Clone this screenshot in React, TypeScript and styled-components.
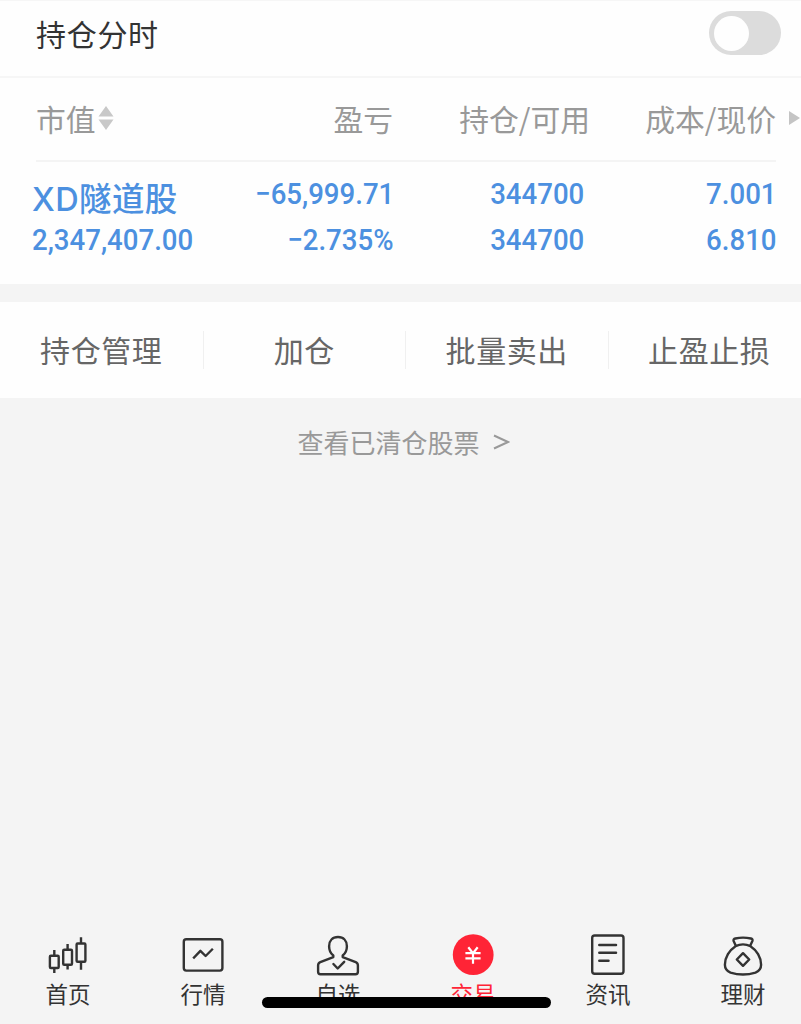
import React from "react";
import styled, { createGlobalStyle } from "styled-components";

const GlobalStyle = createGlobalStyle`
  * { box-sizing: border-box; }
  body {
    margin: 0;
    background: #f4f4f4;
    font-family: "Noto Sans CJK SC", "Noto Sans", sans-serif;
  }
`;

const Page = styled.div`
  position: relative;
  display: flex;
  flex-direction: column;
  height: 1024px;
  overflow: hidden;
  background: #f4f4f4;
`;

const TitleBar = styled.header`
  display: flex;
  flex: none;
  align-items: center;
  justify-content: space-between;
  height: 78px;
  padding: 0 20px 11px 36px;
  background: #fefefe;
  border-top: 1px solid #f6f6f6;
  border-bottom: 2px solid #f6f6f6;
`;

const Title = styled.h1`
  margin: 0;
  padding-bottom: 1px;
  color: #333;
  font-size: 30px;
  font-weight: 400;
  line-height: 44px;
  letter-spacing: 0.7px;
`;

const Switch = styled.button`
  width: 72px;
  height: 44px;
  padding: 4px 5px;
  border: 0;
  border-radius: 22px;
  background: #dcdcdc;
`;

const Knob = styled.span`
  display: block;
  width: 35px;
  height: 35px;
  border-radius: 50%;
  background: #fefefe;
`;

const Holdings = styled.section`
  flex: none;
  height: 206px;
  background: #fefefe;
`;

const Columns = styled.div`
  display: grid;
  grid-template-columns: 197px 160px 197px 186px 1fr;
  padding-left: 36px;
`;

const HeadRow = styled(Columns)`
  height: 82px;
  padding-bottom: 3px;
  align-items: center;
`;

const HeadCell = styled.div<{ $left?: boolean }>`
  display: flex;
  align-items: center;
  justify-content: ${(p) => (p.$left ? "flex-start" : "flex-end")};
  color: #999;
  font-size: 29.8px;
  line-height: 44px;
  white-space: nowrap;
`;

const SortIcon = styled.svg`
  margin-left: 2px;
`;

const MoreIcon = styled.svg`
  margin-left: 13px;
`;

const Rule = styled.div`
  height: 2px;
  margin: 0 25px 0 36px;
  background: #f4f4f4;
`;

const StockRow = styled(Columns)`
  padding-top: 12px;
`;

const StockName = styled.div`
  height: 46px;
  font-family: Inter, "Noto Sans CJK SC", sans-serif;
  font-size: 32.5px;
  font-weight: 500;
  line-height: 52px;
  letter-spacing: 0.4px;
  white-space: nowrap;
`;

const Figure = styled.div`
  height: 46px;
  font-family: Roboto, "Liberation Sans", sans-serif;
  font-size: 30px;
  font-weight: 500;
  line-height: 39px;
  white-space: nowrap;
  transform: scaleX(0.92);
`;

const Pair = styled.div<{ $left?: boolean; $inset?: number }>`
  display: flex;
  flex-direction: column;
  align-items: ${(p) => (p.$left ? "flex-start" : "flex-end")};
  margin-left: ${(p) => (p.$left ? -4 : 0)}px;
  margin-right: -1px;
  padding-right: ${(p) => p.$inset ?? 0}px;
  color: #4c90e0;

  ${Figure} {
    transform-origin: ${(p) => (p.$left ? "left" : "right")} center;
  }
`;

const Actions = styled.nav`
  display: grid;
  flex: none;
  grid-template-columns: 203.5px repeat(3, 202.5px);
  align-items: center;
  height: 96px;
  margin-top: 18px;
  background: #fefefe;
`;

const Action = styled.button`
  height: 38px;
  padding: 0 0 2px;
  border: 0;
  border-right: 1px solid #f0f0f0;
  background: none;
  color: #666;
  font-family: inherit;
  font-size: 30px;
  line-height: 36px;
  letter-spacing: 0.6px;
`;

const ClearedLink = styled.a`
  display: flex;
  flex: none;
  align-items: center;
  align-self: center;
  height: 40px;
  margin: 24px 0 0 6px;
  color: #999;
  font-size: 26px;
  line-height: 40px;
  gap: 13px;
`;

const TabBar = styled.nav`
  display: flex;
  flex: none;
  justify-content: space-between;
  height: 104px;
  margin-top: auto;
  padding: 13px 10px 0 20px;
`;

const Tab = styled.button<{ $active?: boolean }>`
  display: flex;
  flex-direction: column;
  align-items: center;
  width: 96px;
  padding: 0;
  border: 0;
  background: none;
  color: ${(p) => (p.$active ? "#ff2436" : "#333")};
  font-family: inherit;
`;

const TabIcon = styled.svg`
  width: 44px;
  height: 44px;
  fill: none;
  stroke: #333;
  stroke-width: 2.4;
  stroke-linecap: round;
  stroke-linejoin: round;
`;

const TabLabel = styled.span`
  height: 32px;
  font-size: 22.5px;
  line-height: 33px;
`;

const HomeIndicator = styled.div`
  position: absolute;
  left: 262px;
  bottom: 16px;
  width: 289px;
  height: 11px;
  border-radius: 6px;
  background: #000;
`;

const tabs: { label: string; active?: boolean; icon: React.ReactNode }[] = [
  {
    label: "首页",
    icon: (
      <g strokeLinecap="butt">
        <rect x="3.9" y="22.8" width="8.8" height="12.2" rx="1" />
        <rect x="17.2" y="16.8" width="8.8" height="15" rx="1" />
        <rect x="30.6" y="10.5" width="8.8" height="18.2" rx="1" />
        <path d="M8.3 17v5.5M8.3 35v5M21.6 11v5.5M21.6 32v4.5M35 4.2v6M35 29v7.8" />
      </g>
    ),
  },
  {
    label: "行情",
    icon: (
      <>
        <rect x="2.8" y="6.2" width="38.6" height="31.4" rx="2.5" />
        <path d="M13 24.5l6.4-6.7 5.2 5.2 6.4-6.4" strokeLinecap="square" />
      </>
    ),
  },
  {
    label: "自选",
    icon: (
      <>
        <path d="M17.3 22.5c-3-2.4-4.2-5.7-4.2-9.3 0-5.6 3.5-9.2 8.9-9.2s8.9 3.6 8.9 9.2c0 3.6-1.2 6.9-4.2 9.3v1.6l13 5.1q2.2.9 2.2 3.2v6.4q0 2.4-2.4 2.4h-35q-2.4 0-2.4-2.4v-6.4q0-2.3 2.2-3.2l13-5.1z" />
        <path d="M17.4 31l4.3 4.5 6.5-6.7" />
      </>
    ),
  },
  {
    label: "交易",
    active: true,
    icon: (
      <>
        <circle cx="22.2" cy="21.7" r="20.4" fill="#ff2436" stroke="none" />
        <path
          d="M17.3 14.2l4.7 6 4.7-6M14.4 20.2h15.2M14.4 25.4h15.2M22 20v10.8"
          stroke="#fff"
          strokeWidth="2.2"
          strokeLinecap="butt"
        />
      </>
    ),
  },
  {
    label: "资讯",
    icon: (
      <>
        <rect x="6.2" y="2.5" width="31.3" height="38.3" rx="2.5" />
        <path d="M13.3 12H30M13.3 19.7H30M13.3 27.8h9.2" strokeWidth="2.5" />
      </>
    ),
  },
  {
    label: "理财",
    icon: (
      <>
        <path d="M14.6 12.2l-2-4.2Q12 6 14.3 5.5q7.7-1.8 15.6 0 2.2.5 1.5 2.5l-2 4.2" />
        <path d="M14.5 13.2Q22 9.5 29.5 13.2c6.1 4 10.6 11.2 10.6 18.5 0 3.8-1.8 6.3-5.6 7.9-8 2.5-17 2.5-25 0-3.8-1.6-5.6-4.1-5.6-7.9 0-7.3 4.5-14.5 10.6-18.5z" />
        <path d="M22 20.2l6.2 6.3-6.2 6.3-6.2-6.3z" />
      </>
    ),
  },
];

const actions = ["持仓管理", "加仓", "批量卖出", "止盈止损"];

export default function App() {
  return (
    <Page>
      <GlobalStyle />
      <TitleBar>
        <Title>持仓分时</Title>
        <Switch role="switch" aria-checked={false} aria-label="持仓分时">
          <Knob />
        </Switch>
      </TitleBar>

      <Holdings>
        <HeadRow>
          <HeadCell $left>
            市值
            <SortIcon width="16" height="26" viewBox="0 0 16 26" fill="#c8c8c8">
              <path d="M8 1l7.5 10.5H.5zM8 25L.5 14.5h15z" />
            </SortIcon>
          </HeadCell>
          <HeadCell>盈亏</HeadCell>
          <HeadCell>持仓/可用</HeadCell>
          <HeadCell>成本/现价</HeadCell>
          <MoreIcon width="11" height="16" viewBox="0 0 11 16" fill="#c4c4c4">
            <path d="M0 1l11 7-11 7z" />
          </MoreIcon>
        </HeadRow>
        <Rule />
        <StockRow>
          <Pair $left>
            <StockName>XD隧道股</StockName>
            <Figure>2,347,407.00</Figure>
          </Pair>
          <Pair>
            <Figure>−65,999.71</Figure>
            <Figure>−2.735%</Figure>
          </Pair>
          <Pair $inset={7}>
            <Figure>344700</Figure>
            <Figure>344700</Figure>
          </Pair>
          <Pair>
            <Figure>7.001</Figure>
            <Figure>6.810</Figure>
          </Pair>
        </StockRow>
      </Holdings>

      <Actions>
        {actions.map((label) => (
          <Action key={label}>{label}</Action>
        ))}
      </Actions>

      <ClearedLink>
        <span>查看已清仓股票</span>
        <svg width="17" height="16" viewBox="0 0 17 16" fill="none" stroke="#999" strokeWidth="2">
          <path d="M1 1.5L15 8 1 14.5" />
        </svg>
      </ClearedLink>

      <TabBar>
        {tabs.map((tab) => (
          <Tab key={tab.label} $active={tab.active}>
            <TabIcon viewBox="0 0 44 44">{tab.icon}</TabIcon>
            <TabLabel>{tab.label}</TabLabel>
          </Tab>
        ))}
      </TabBar>
      <HomeIndicator />
    </Page>
  );
}
